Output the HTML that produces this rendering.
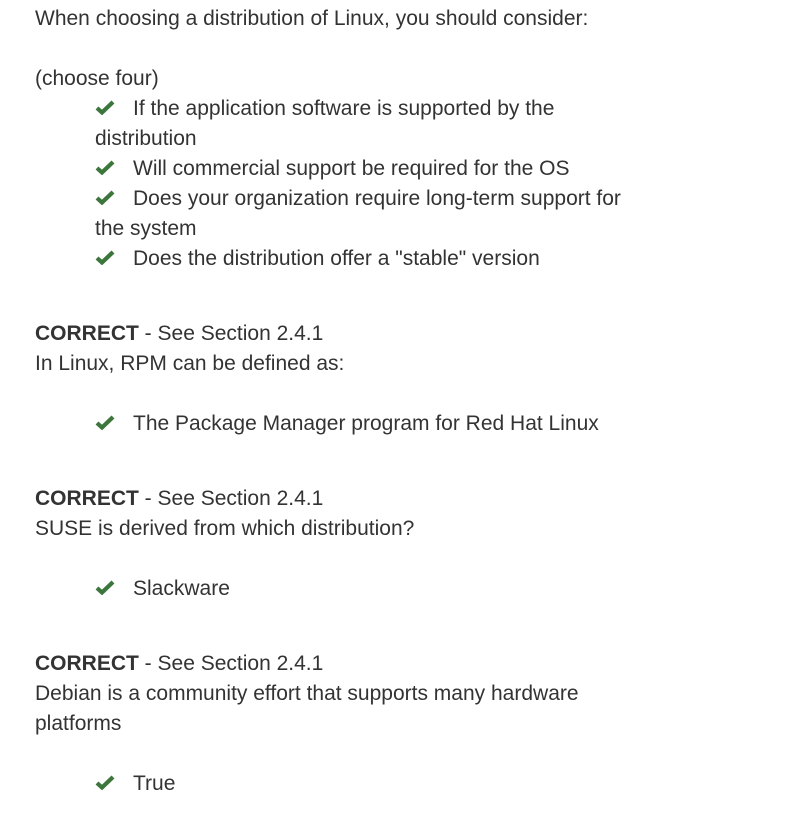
<!DOCTYPE html>
<html><head><meta charset="utf-8"><style>
body{margin:0;background:#fff;width:804px;height:814px;position:relative;overflow:hidden;font-family:"Liberation Sans",Arial,sans-serif;font-size:21px;color:#333}
.l{position:absolute;height:30px;line-height:30px;white-space:nowrap;margin-top:1px}
.c{position:absolute;left:95px;width:20px;height:15px}
b{font-weight:bold}
</style></head><body>
<div class="l" style="left:35px;top:3px">When choosing a distribution of Linux, you should consider:</div>
<div class="l" style="left:35px;top:63px">(choose four)</div>
<svg class="c" style="top:100px" viewBox="0 0 20 15"><path d="M2 8 L7 12.5 L18 2" stroke="#3c763d" stroke-width="4.2" fill="none"/></svg>
<div class="l" style="left:133px;top:93px">If the application software is supported by the</div>
<div class="l" style="left:95px;top:123px">distribution</div>
<svg class="c" style="top:160px" viewBox="0 0 20 15"><path d="M2 8 L7 12.5 L18 2" stroke="#3c763d" stroke-width="4.2" fill="none"/></svg>
<div class="l" style="left:133px;top:153px">Will commercial support be required for the OS</div>
<svg class="c" style="top:190px" viewBox="0 0 20 15"><path d="M2 8 L7 12.5 L18 2" stroke="#3c763d" stroke-width="4.2" fill="none"/></svg>
<div class="l" style="left:133px;top:183px">Does your organization require long-term support for</div>
<div class="l" style="left:95px;top:213px">the system</div>
<svg class="c" style="top:250px" viewBox="0 0 20 15"><path d="M2 8 L7 12.5 L18 2" stroke="#3c763d" stroke-width="4.2" fill="none"/></svg>
<div class="l" style="left:133px;top:243px">Does the distribution offer a "stable" version</div>

<div class="l" style="left:35px;top:318px"><b>CORRECT</b> - See Section 2.4.1</div>
<div class="l" style="left:35px;top:348px">In Linux, RPM can be defined as:</div>
<svg class="c" style="top:415px" viewBox="0 0 20 15"><path d="M2 8 L7 12.5 L18 2" stroke="#3c763d" stroke-width="4.2" fill="none"/></svg>
<div class="l" style="left:133px;top:408px">The Package Manager program for Red Hat Linux</div>

<div class="l" style="left:35px;top:483px"><b>CORRECT</b> - See Section 2.4.1</div>
<div class="l" style="left:35px;top:513px">SUSE is derived from which distribution?</div>
<svg class="c" style="top:580px" viewBox="0 0 20 15"><path d="M2 8 L7 12.5 L18 2" stroke="#3c763d" stroke-width="4.2" fill="none"/></svg>
<div class="l" style="left:133px;top:573px">Slackware</div>

<div class="l" style="left:35px;top:648px"><b>CORRECT</b> - See Section 2.4.1</div>
<div class="l" style="left:35px;top:678px">Debian is a community effort that supports many hardware</div>
<div class="l" style="left:35px;top:708px">platforms</div>
<svg class="c" style="top:775px" viewBox="0 0 20 15"><path d="M2 8 L7 12.5 L18 2" stroke="#3c763d" stroke-width="4.2" fill="none"/></svg>
<div class="l" style="left:133px;top:768px">True</div>
</body></html>
